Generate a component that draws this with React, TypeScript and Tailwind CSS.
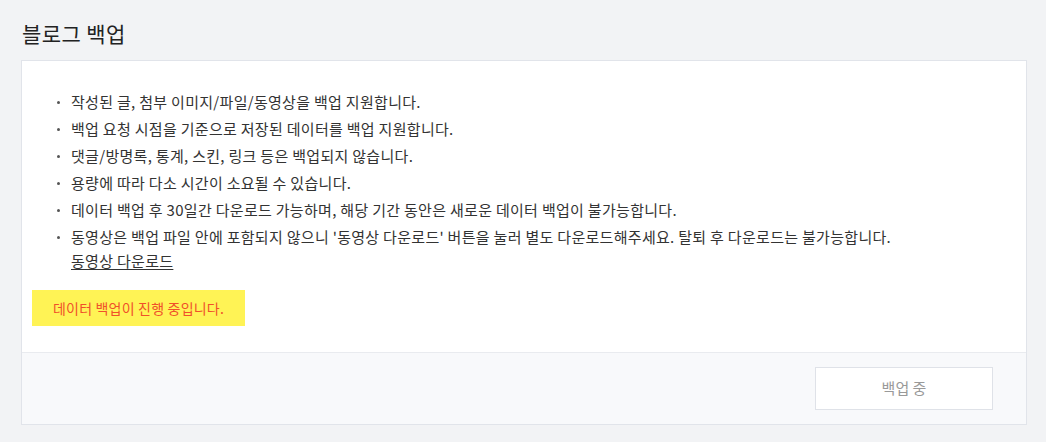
export default function App() {
  const items = [
    '작성된 글, 첨부 이미지/파일/동영상을 백업 지원합니다.',
    '백업 요청 시점을 기준으로 저장된 데이터를 백업 지원합니다.',
    '댓글/방명록, 통계, 스킨, 링크 등은 백업되지 않습니다.',
    '용량에 따라 다소 시간이 소요될 수 있습니다.',
    '데이터 백업 후 30일간 다운로드 가능하며, 해당 기간 동안은 새로운 데이터 백업이 불가능합니다.',
  ];

  const dot = (
    <span className="w-[15px] shrink-0 flex items-center h-[24px]">
      <span className="w-[3px] h-[3px] rounded-full bg-[#555] ml-[1px]" />
    </span>
  );

  return (
    <div
      className="w-[1046px] h-[442px] bg-[#f2f3f5] text-[#333] overflow-hidden"
      style={{ fontFamily: '"Noto Sans CJK KR", "Noto Sans", sans-serif' }}
    >
      <h2 className="pl-[22px] pt-[18px] h-[60px] text-[21px] leading-[30px] tracking-[0.4px] text-[#222]">블로그 백업</h2>

      <div className="ml-[21px] w-[1006px] bg-white border border-[#e1e4ea]">
        <div className="px-[10px] pt-[29px] pb-[26px]">
          <ul className="pl-[24px] text-[15px] tracking-[0.3px]">
            {items.map((t) => (
              <li key={t} className="flex leading-[24px] mb-[3px]">
                {dot}
                <span>{t}</span>
              </li>
            ))}
            <li className="flex leading-[24px]">
              {dot}
              <div>
                <div>
                  동영상은 백업 파일 안에 포함되지 않으니 '동영상 다운로드' 버튼을 눌러 별도 다운로드해주세요. 탈퇴 후 다운로드는 불가능합니다.
                </div>
                <a className="underline underline-offset-2 text-[#333]">동영상 다운로드</a>
              </div>
            </li>
          </ul>

          <div className="mt-[17px] w-[213px] h-[36px] bg-[#fff355] flex items-center justify-center text-[14px] tracking-[0.2px] text-[#f0502a]">
            데이터 백업이 진행 중입니다.
          </div>
        </div>

        <div className="border-t border-[#e9ebef] bg-[#f8f9fb] h-[72px] flex items-center justify-end pr-[33px]">
          <button className="w-[178px] h-[43px] bg-white border border-[#dfe2e8] text-[15px] text-[#999]">
            백업 중
          </button>
        </div>
      </div>
    </div>
  );
}
